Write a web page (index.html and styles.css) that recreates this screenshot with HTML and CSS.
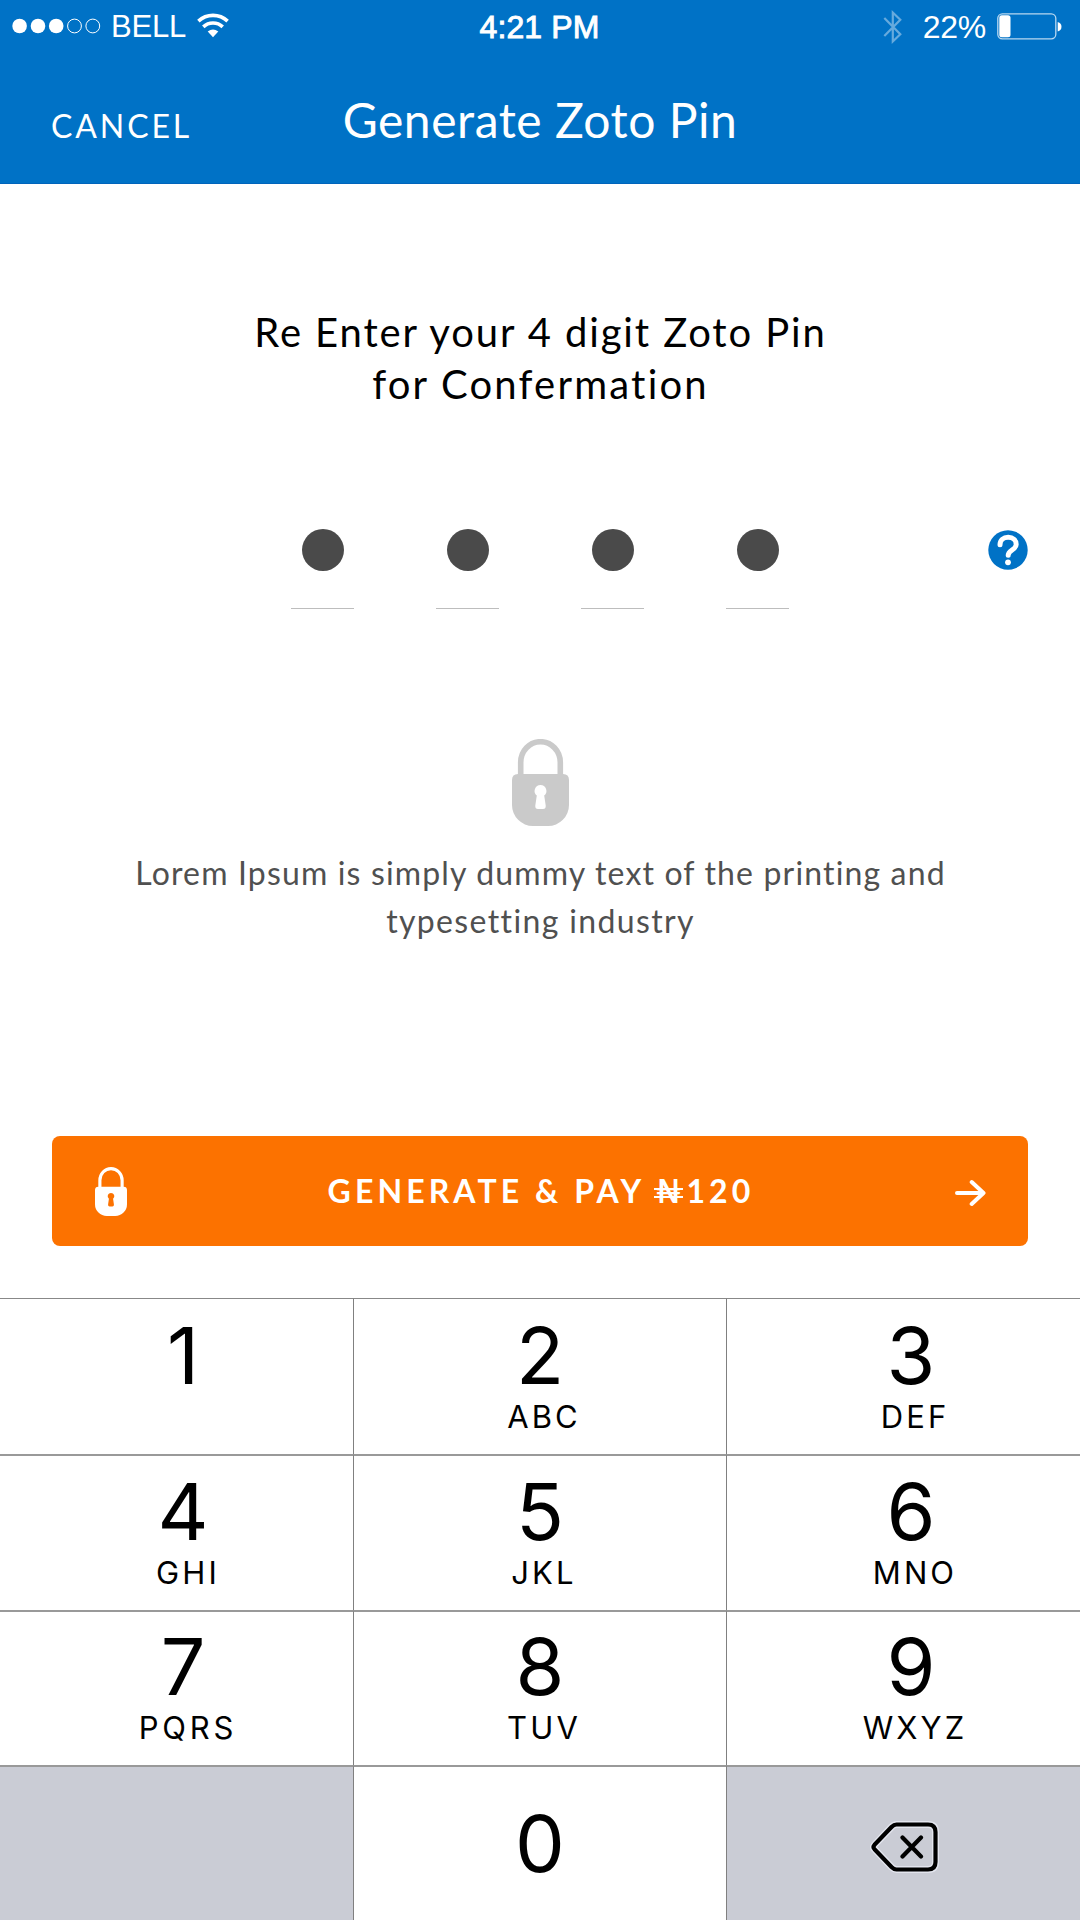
FILE: index.html
```html
<!DOCTYPE html>
<html lang="en">
<head>
<meta charset="utf-8">
<title>Generate Zoto Pin</title>
<link rel="stylesheet" href="styles.css">
</head>
<body>
<svg class="defs" width="0" height="0" aria-hidden="true">
  <symbol id="lock" viewBox="0 0 57 87">
    <path d="M8.7 38V23.5a19.8 20.8 0 0 1 39.6 0V38" fill="none" stroke="currentColor" stroke-width="5.6"/>
    <path fill="currentColor" fill-rule="evenodd" d="M6 35H51Q57 35 57 41V66A21 21 0 0 1 36 87H21A21 21 0 0 1 0 66V41Q0 35 6 35ZM28.500 46A5.900 5.900 0 0 0 24.800 56.500L23.300 66.500Q23 70 26 70H31Q34 70 33.700 66.500L32.200 56.500A5.900 5.900 0 0 0 28.500 46Z"/>
  </symbol>
</svg>
<div class="screen">
  <header class="header">
    <div class="status">
      <div class="carrier">
        <svg class="signal" width="90" height="16" viewBox="0 0 90 16"><g fill="#fff"><circle cx="7.600" cy="8" r="7.300"/><circle cx="26" cy="8" r="7.300"/><circle cx="44.200" cy="8" r="7.300"/></g><g fill="none" stroke="#fff" stroke-width="1"><circle cx="62.500" cy="8" r="6.900"/><circle cx="80.800" cy="8" r="6.900"/></g></svg>
        <span class="network">BELL</span>
        <svg class="wifi" width="32" height="25" viewBox="0 0 32 25"><g fill="none" stroke="#fff" stroke-width="3.600"><path d="M1.400 8.100a21.500 21.500 0 0 1 29.200 0"/><path d="M6.300 13.900a14 14 0 0 1 19.400 0"/></g><path d="M16 24.200 10.700 18.600q5.300-4.200 10.600 0Z" fill="#fff"/></svg>
      </div>
      <div class="time">4:21 PM</div>
      <div class="power">
        <svg class="bluetooth" width="20" height="36" viewBox="0 0 20 36"><path d="M1.300 9 17.300 25.300 9.800 32.500V3.500L17.300 10.700 1.300 27" fill="none" stroke="#66aadd" stroke-width="2.200"/></svg>
        <span class="percent">22%</span>
        <svg class="battery" width="65" height="27" viewBox="0 0 65 27"><rect x=".8" y=".8" width="58" height="25" rx="4.500" fill="none" stroke="#b8d8f0" stroke-width="1.300"/><rect x="2.300" y="2.300" width="11.200" height="22" rx="2.500" fill="#fff"/><path d="M60.700 9q3.800 1 3.800 4.700t-3.800 4.700Z" fill="#fff"/></svg>
      </div>
    </div>
    <div class="nav">
      <span class="cancel">CANCEL</span>
      <h1 class="title">Generate Zoto Pin</h1>
    </div>
  </header>
  <main class="main">
    <p class="prompt"><span class="line">Re Enter your 4 digit Zoto Pin</span><span class="line line-wide">for Confermation</span></p>
    <div class="pin">
      <div class="slots">
        <div class="slot"><i class="dot"></i></div>
        <div class="slot"><i class="dot"></i></div>
        <div class="slot"><i class="dot"></i></div>
        <div class="slot"><i class="dot"></i></div>
      </div>
      <svg class="help" width="40" height="40" viewBox="0 0 40 40"><circle cx="20" cy="20" r="19.700" fill="#0072c6"/><path d="M12 14.800C12 10 15.300 7.300 20.200 7.300 25.100 7.300 28.200 10.300 28.200 14.400 28.200 19.800 20.200 20.300 20.200 25.300" fill="none" stroke="#fff" stroke-width="5" stroke-linecap="round"/><circle cx="20" cy="32.300" r="2.900" fill="#fff"/></svg>
    </div>
    <svg class="lock" width="57" height="87"><use href="#lock"/></svg>
    <p class="note"><span class="line">Lorem Ipsum is simply dummy text of the printing and</span><span class="line line-wide">typesetting industry</span></p>
    <div class="pay">
      <svg class="pay-lock" width="32" height="49"><use href="#lock"/></svg>
      <span class="pay-label">GENERATE &amp; PAY <span class="naira">₦</span>120</span>
      <svg class="arrow" width="31" height="28" viewBox="0 0 31 28"><path d="M2 14H28M16.700 3 28.500 14 16.700 25" fill="none" stroke="#fff" stroke-width="4" stroke-linecap="round" stroke-linejoin="round"/></svg>
    </div>
  </main>
  <div class="keypad">
    <div class="key left top"><span class="num">1</span></div>
    <div class="key top"><span class="num">2</span><span class="abc">ABC</span></div>
    <div class="key right top"><span class="num">3</span><span class="abc">DEF</span></div>
    <div class="key left"><span class="num">4</span><span class="abc">GHI</span></div>
    <div class="key"><span class="num">5</span><span class="abc">JKL</span></div>
    <div class="key right"><span class="num">6</span><span class="abc">MNO</span></div>
    <div class="key left low"><span class="num">7</span><span class="abc abc-four">PQRS</span></div>
    <div class="key low"><span class="num">8</span><span class="abc">TUV</span></div>
    <div class="key right low"><span class="num">9</span><span class="abc">WXYZ</span></div>
    <div class="key left blank"></div>
    <div class="key zero"><span class="num">0</span></div>
    <div class="key right blank"><svg class="erase" width="70" height="54" viewBox="0 0 70 54"><g stroke-linecap="round" stroke-linejoin="round" fill="none"><path d="M26.500 4.500H58Q65.500 4.500 65.500 12V42Q65.500 49.500 58 49.500H26.500Q24 49.500 21.500 47L4.500 29.200Q2.500 27 4.500 24.800L21.500 7Q24 4.500 26.500 4.500Z" stroke="#e3e5ee" stroke-width="7"/><path d="M26.500 4.500H58Q65.500 4.500 65.500 12V42Q65.500 49.500 58 49.500H26.500Q24 49.500 21.500 47L4.500 29.200Q2.500 27 4.500 24.800L21.500 7Q24 4.500 26.500 4.500ZM32.500 17.500 51 36.500M51 17.500 32.500 36.500" stroke="#000" stroke-width="4.200"/></g></svg></div>
  </div>
</div>
</body>
</html>
```
FILE: styles.css
```css
* { box-sizing: border-box; }
body { margin: 0; background: #fff; }
.defs { display: none; }
svg { display: block; flex: none; }
.screen {
  width: 1080px; height: 1920px; overflow: hidden;
  display: flex; flex-direction: column;
  background: #fff; font-family: Lato, sans-serif;
}

.header { height: 184px; background: #0072c6; color: #fff; border-bottom: 1px solid #0064bb; }
.status {
  height: 43px; margin-top: 9px; padding: 0 18px 0 12px;
  display: grid; grid-template-columns: 1fr auto 1fr;
  font: 32px/36px "Liberation Sans", Arial, sans-serif;
}
.carrier { display: flex; }
.signal { margin-top: 9px; }
.network { margin-left: 9px; font-size: 31px; letter-spacing: -0.2px; }
.wifi { margin: 4px 0 0 11px; }
.time { padding-left: 5px; letter-spacing: 0.1px; -webkit-text-stroke: 0.9px #fff; }
.power { display: flex; justify-content: flex-end; }
.percent { margin-left: 20px; letter-spacing: -0.3px; }
.battery { margin: 4px 0 0 11px; }
.nav {
  margin-top: 39px; padding: 0 51px;
  display: grid; grid-template-columns: 1fr auto 1fr; align-items: baseline;
}
.cancel { font-size: 32px; letter-spacing: 2.9px; }
.title { margin: 0; font-size: 48px; font-weight: 400; letter-spacing: 0.53px; line-height: 58px; }

.main { height: 1114px; display: flex; flex-direction: column; align-items: center; }
.prompt, .note { margin: 0; text-align: center; }
.line { display: block; }
.prompt { margin-top: 122px; padding-left: 1px; font-size: 40px; line-height: 52px; letter-spacing: 1.88px; color: #000; }
.prompt .line-wide { letter-spacing: 2.2px; }
.pin { width: 976px; height: 80px; margin-top: 119px; display: flex; justify-content: flex-end; }
.slots { display: flex; gap: 82px; margin-right: 199px; }
.slot { width: 63px; height: 80px; border-bottom: 1px solid #bdbdbd; display: flex; justify-content: center; }
.dot { width: 42px; height: 42px; border-radius: 50%; background: #4a4a4a; }
.help { margin-top: 1px; }
.lock { margin-top: 130px; color: #cacaca; }
.note { margin-top: 23px; padding-left: 1px; font-size: 32px; line-height: 48px; letter-spacing: 1.15px; color: #505050; }
.note .line-wide { letter-spacing: 1.36px; }
.pay {
  width: 976px; height: 110px; margin-top: 191px; padding: 0 42px 0 43px;
  display: flex; align-items: center; justify-content: space-between;
  border-radius: 8px; background: #fc7200; color: #fff;
}
.pay-label { font-size: 32px; font-weight: 700; letter-spacing: 4.1px; line-height: 38px; }
.naira { position: relative; letter-spacing: 5px; }
/* thin crossbars that run past both sides of the currency sign */
.naira::before, .naira::after {
  content: ""; position: absolute; left: -2px; width: 29px; height: 1.5px; background: #fff;
}
.naira::before { top: 17px; }
.naira::after { top: 25px; }
.arrow { margin-top: 4px; }

.keypad {
  display: grid; grid-template-columns: 354px 373px 353px;
  grid-template-rows: 156px 156px 155px 155px;
  font-family: Inter, sans-serif; color: #000;
}
.key {
  display: flex; flex-direction: column; align-items: center;
  padding-top: 15px; border-top: 2px solid #999; border-right: 1px solid #808080;
}
.key.top { border-top: 1px solid #888; padding-top: 16px; }
.key.left { padding-left: 13px; }
.key.right { padding-left: 15px; border-right: 0; }
.key.low { padding-top: 14px; }
.num { font-size: 79px; line-height: 80px; }
.abc { margin-top: 6px; padding-left: 8px; font-size: 31px; line-height: 32px; letter-spacing: 3.1px; }
.left .abc { padding-left: 10px; }
.abc-four { letter-spacing: 3.8px; }
.key.zero { padding-top: 36px; }
.key.blank { background: #caccd5; }
.key.right.blank { padding-left: 3px; }
.erase { margin-top: 38px; }
```
